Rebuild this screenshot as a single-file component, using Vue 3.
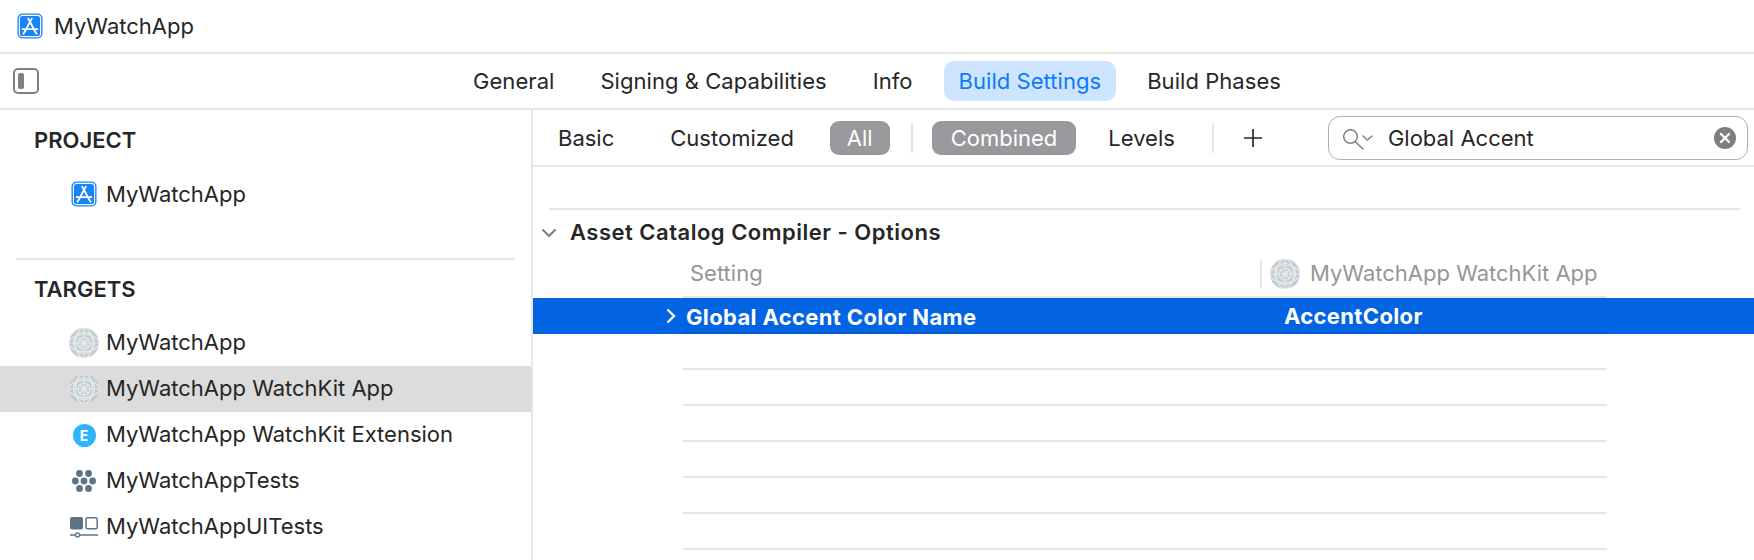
<template>
  <div class="window">
    <svg class="defs" width="0" height="0" aria-hidden="true">
      <symbol id="app-icon" viewBox="0 0 26 26">
        <rect x="0.5" y="0.5" width="25" height="25" rx="5" fill="#1b84f5" />
        <rect x="2.4" y="2.4" width="21.2" height="21.2" rx="3.2" fill="none" stroke="#fff" stroke-width="1.1" />
        <path d="M11.2 5.6 18.400 19M14.800 5.600 7.600 19M5.600 16.200h14.800M6.400 20.800l1-1.600M19.600 20.800l-1-1.600" fill="none" stroke="#fff" stroke-width="1.800" stroke-linecap="round" />
      </symbol>
      <symbol id="globe" viewBox="0 0 30 30">
        <circle cx="15" cy="15" r="15" fill="#c3ccd1" />
        <g fill="none" stroke="#e8ecee" stroke-width="1.100">
          <circle cx="15" cy="15" r="10.500" />
          <circle cx="15" cy="15" r="6" />
          <ellipse cx="15" cy="15" rx="8.500" ry="15" />
          <ellipse cx="15" cy="15" rx="15" ry="8.500" />
          <path d="M15 0v30M0 15h30M10.500 10.500l9 9M19.500 10.500l-9 9" />
        </g>
      </symbol>
    </svg>

    <header class="titlebar">
      <svg class="icon-app"><use href="#app-icon" /></svg>
      <span class="title">MyWatchApp</span>
    </header>

    <nav class="tabbar">
      <div class="toggle"><span class="toggle-fill"></span></div>
      <div class="tabs">
        <span v-for="tab in tabs" :key="tab" class="tab" :class="{ active: tab === 'Build Settings' }">{{ tab }}</span>
      </div>
    </nav>

    <div class="body">
      <aside class="sidebar">
        <h2 class="side-head">PROJECT</h2>
        <div class="side-row project-row">
          <span class="side-icon"><svg class="icon-app"><use href="#app-icon" /></svg></span>
          <span>MyWatchApp</span>
        </div>
        <div class="side-divider"></div>
        <h2 class="side-head targets-head">TARGETS</h2>
        <div v-for="t in targets" :key="t.name" class="side-row" :class="{ selected: t.selected }">
          <span class="side-icon">
            <svg v-if="t.icon === 'globe'" class="icon-globe"><use href="#globe" /></svg>
            <span v-else-if="t.icon === 'ext'" class="icon-ext">E</span>
            <svg v-else-if="t.icon === 'tests'" class="icon-tests" viewBox="0 0 24 22">
              <g fill="#5d7486">
                <circle cx="7.500" cy="3.500" r="3.400" />
                <circle cx="16.500" cy="3.500" r="3.400" />
                <circle cx="3.400" cy="11" r="3.400" />
                <circle cx="12" cy="11" r="3.400" />
                <circle cx="20.600" cy="11" r="3.400" />
                <circle cx="7.500" cy="18.500" r="3.400" />
                <circle cx="16.500" cy="18.500" r="3.400" />
              </g>
            </svg>
            <svg v-else class="icon-ui" viewBox="0 0 28 21">
              <rect x="0" y="0" width="13" height="12.500" rx="2" fill="#5d7486" />
              <rect x="16" y="0.800" width="11.200" height="11" rx="1.500" fill="none" stroke="#5d7486" stroke-width="1.500" />
              <path d="M0 18h5.500M9.500 18H28" stroke="#5d7486" stroke-width="1.600" />
              <circle cx="7.500" cy="18" r="2" fill="none" stroke="#5d7486" stroke-width="1.300" />
            </svg>
          </span>
          <span class="side-label">{{ t.name }}</span>
        </div>
      </aside>

      <main class="main">
        <div class="toolbar">
          <span class="filter f-basic">Basic</span>
          <span class="filter f-custom">Customized</span>
          <span class="filter chip f-all">All</span>
          <span class="sep sep-a"></span>
          <span class="filter chip f-combined">Combined</span>
          <span class="filter f-levels">Levels</span>
          <span class="sep sep-b"></span>
          <svg class="plus" viewBox="0 0 18 18"><path d="M9 0v18M0 9h18" stroke="#2a2a2a" stroke-width="1.700" /></svg>
          <div class="search">
            <svg class="search-icon" viewBox="0 0 30 21">
              <circle cx="7.500" cy="7.500" r="6.800" fill="none" stroke="#808080" stroke-width="1.500" />
              <path d="M12 12.500l8 7.500" stroke="#808080" stroke-width="1.600" stroke-linecap="round" />
              <path d="M20 7l4.500 4L29 7" fill="none" stroke="#808080" stroke-width="1.500" stroke-linecap="round" />
            </svg>
            <span class="search-text">Global Accent</span>
            <svg class="clear" viewBox="0 0 22 22">
              <circle cx="11" cy="11" r="11" fill="#7e7e7e" />
              <path d="M7 7l8 8M15 7l-8 8" stroke="#fff" stroke-width="2.400" stroke-linecap="round" />
            </svg>
          </div>
        </div>

        <div class="content">
          <div class="top-line"></div>
          <div class="section-head">
            <svg class="section-chevron" viewBox="0 0 16 10"><path d="M1.500 1.500 8 8l6.500-6.500" fill="none" stroke="#7c7c7c" stroke-width="2" /></svg>
            <span>Asset Catalog Compiler - Options</span>
          </div>
          <div class="col-head">
            <span class="col-setting">Setting</span>
            <span class="col-sep"></span>
            <svg class="icon-globe"><use href="#globe" /></svg>
            <span class="col-target">MyWatchApp WatchKit App</span>
          </div>
          <div class="row-selected">
            <svg class="row-chevron" viewBox="0 0 10 16"><path d="M1.500 1.500 8 8l-6.500 6.500" fill="none" stroke="#fff" stroke-width="2.400" /></svg>
            <span class="row-name">Global Accent Color Name</span>
            <span class="row-value">AccentColor</span>
            <span class="row-under"></span>
          </div>
          <div v-for="n in 6" :key="n" class="row-empty"></div>
        </div>
      </main>
    </div>
  </div>
</template>

<script setup>
const tabs = ['General', 'Signing & Capabilities', 'Info', 'Build Settings', 'Build Phases']

const targets = [
  { name: 'MyWatchApp', icon: 'globe' },
  { name: 'MyWatchApp WatchKit App', icon: 'globe', selected: true },
  { name: 'MyWatchApp WatchKit Extension', icon: 'ext' },
  { name: 'MyWatchAppTests', icon: 'tests' },
  { name: 'MyWatchAppUITests', icon: 'ui' }
]
</script>

<style>
html, body { background: #fff; }
</style>

<style scoped>
.window {
  width: 1754px;
  height: 560px;
  overflow: hidden;
  display: flex;
  flex-direction: column;
  font-family: Inter, "Liberation Sans", sans-serif;
  font-size: 22px;
  color: #262626;
  background: #fff;
}
.defs { position: absolute; }

.titlebar {
  height: 52px;
  flex: none;
  display: flex;
  align-items: center;
  padding-left: 17px;
  gap: 11px;
  border-bottom: 2px solid #e6e6e6;
}
.icon-app { width: 26px; height: 26px; display: block; }

.tabbar {
  height: 54px;
  flex: none;
  display: grid;
  grid-template-columns: 1fr auto 1fr;
  align-items: center;
  border-bottom: 2px solid #e6e6e6;
}
.toggle {
  margin-left: 13px;
  width: 26px;
  height: 26px;
  box-sizing: border-box;
  border: 2px solid #808080;
  border-radius: 5px;
  padding: 3px;
}
.toggle-fill { display: block; width: 6px; height: 100%; background: #808080; border-radius: 2px; }
.tabs { grid-column: 2; display: flex; gap: 16px; }
.tab { padding: 0 15px; height: 40px; line-height: 40px; border-radius: 10px; white-space: nowrap; letter-spacing: 0.05px; }
.tab.active { background: #cfe5ff; color: #0a7aff; }

.body { flex: 1; display: flex; min-height: 0; }

.sidebar { width: 531px; flex: none; border-right: 2px solid #e6e6e6; }
.side-head { margin: 0; height: 60px; line-height: 60px; padding-left: 34px; font-size: 22px; font-weight: 600; }
.targets-head { line-height: 58px; }
.side-row { height: 46px; display: flex; align-items: center; white-space: nowrap; }
.side-label { padding-bottom: 2px; }
.project-row { margin-top: 1px; margin-bottom: 41px; }
.side-divider { height: 2px; margin: 0 16px; background: #e6e6e6; }
.side-row.selected { background: #dcdcdc; }
.side-icon { width: 106px; flex: none; display: flex; justify-content: center; padding-left: 69px; padding-right: 7px; box-sizing: border-box; }
.icon-globe { width: 30px; height: 30px; display: block; flex: none; }
.icon-ext {
  width: 23px;
  height: 23px;
  border-radius: 50%;
  background: #2fb4fb;
  color: #fff;
  font-size: 14px;
  font-weight: 700;
  line-height: 23px;
  text-align: center;
}
.icon-tests { width: 24px; height: 22px; display: block; }
.icon-ui { width: 28px; height: 21px; display: block; }

.main { flex: 1; min-width: 0; }
.toolbar {
  height: 55px;
  display: flex;
  align-items: center;
  border-bottom: 2px solid #e6e6e6;
  padding-left: 25px;
}
.filter { white-space: nowrap; }
.f-basic { margin-right: 56px; }
.f-custom { margin-right: 36px; }
.chip { height: 34px; line-height: 34px; border-radius: 9px; background: #98989d; color: #fff; padding: 0 17px; }
.f-combined { padding: 0 19px; }
.f-levels { margin-left: 32px; }
.sep { width: 2px; height: 30px; background: #e6e6e6; flex: none; }
.sep-a { margin: 0 19px 0 21px; }
.sep-b { margin-left: 37px; }
.plus { width: 18px; height: 18px; margin-left: 30px; flex: none; }
.search {
  margin-left: 66px;
  width: 420px;
  height: 44px;
  box-sizing: border-box;
  border: 1px solid #b0b0b0;
  border-radius: 12px;
  display: flex;
  align-items: center;
  padding-left: 14px;
  flex: none;
}
.search-icon { width: 30px; height: 21px; flex: none; margin-top: 4px; }
.search-text { margin-left: 15px; flex: 1; }
.clear { width: 22px; height: 22px; margin-right: 11px; flex: none; }

.content { padding-top: 41px; }
.top-line { height: 2px; margin: 0 14px 0 16px; background: #e6e6e6; }
.section-head {
  height: 45px;
  display: flex;
  align-items: center;
  padding-left: 8px;
  font-weight: 600;
  letter-spacing: 0.5px;
}
.section-head span { padding-bottom: 2px; }
.section-chevron { width: 16px; height: 10px; margin-right: 13px; flex: none; }
.col-head {
  height: 41px;
  margin-left: 150px;
  width: 924px;
  display: flex;
  align-items: center;
  color: #969696;
  border-bottom: 2px solid #e6e6e6;
}
.col-setting { margin-left: 7px; width: 570px; margin-top: -6px; }
.col-sep { width: 2px; height: 28px; background: #e6e6e6; margin-right: 8px; margin-top: -4px; }
.col-head .icon-globe { margin-top: -4px; }
.col-target { margin-left: 10px; white-space: nowrap; margin-top: -6px; }
.row-selected {
  position: relative;
  height: 36px;
  display: flex;
  align-items: center;
  background: #0364e3;
  color: #fff;
  font-weight: 700;
  white-space: nowrap;
  letter-spacing: 0.35px;
}
.row-chevron { width: 10px; height: 16px; margin-left: 133px; flex: none; }
.row-name { margin-left: 10px; width: 598px; padding-top: 2px; }
.row-value { margin-top: -1px; }
.row-under { position: absolute; left: 150px; width: 924px; bottom: 0; height: 2px; background: #0258cc; }
.row-empty { height: 34px; margin-left: 150px; width: 924px; border-bottom: 2px solid #e6e6e6; }
</style>
